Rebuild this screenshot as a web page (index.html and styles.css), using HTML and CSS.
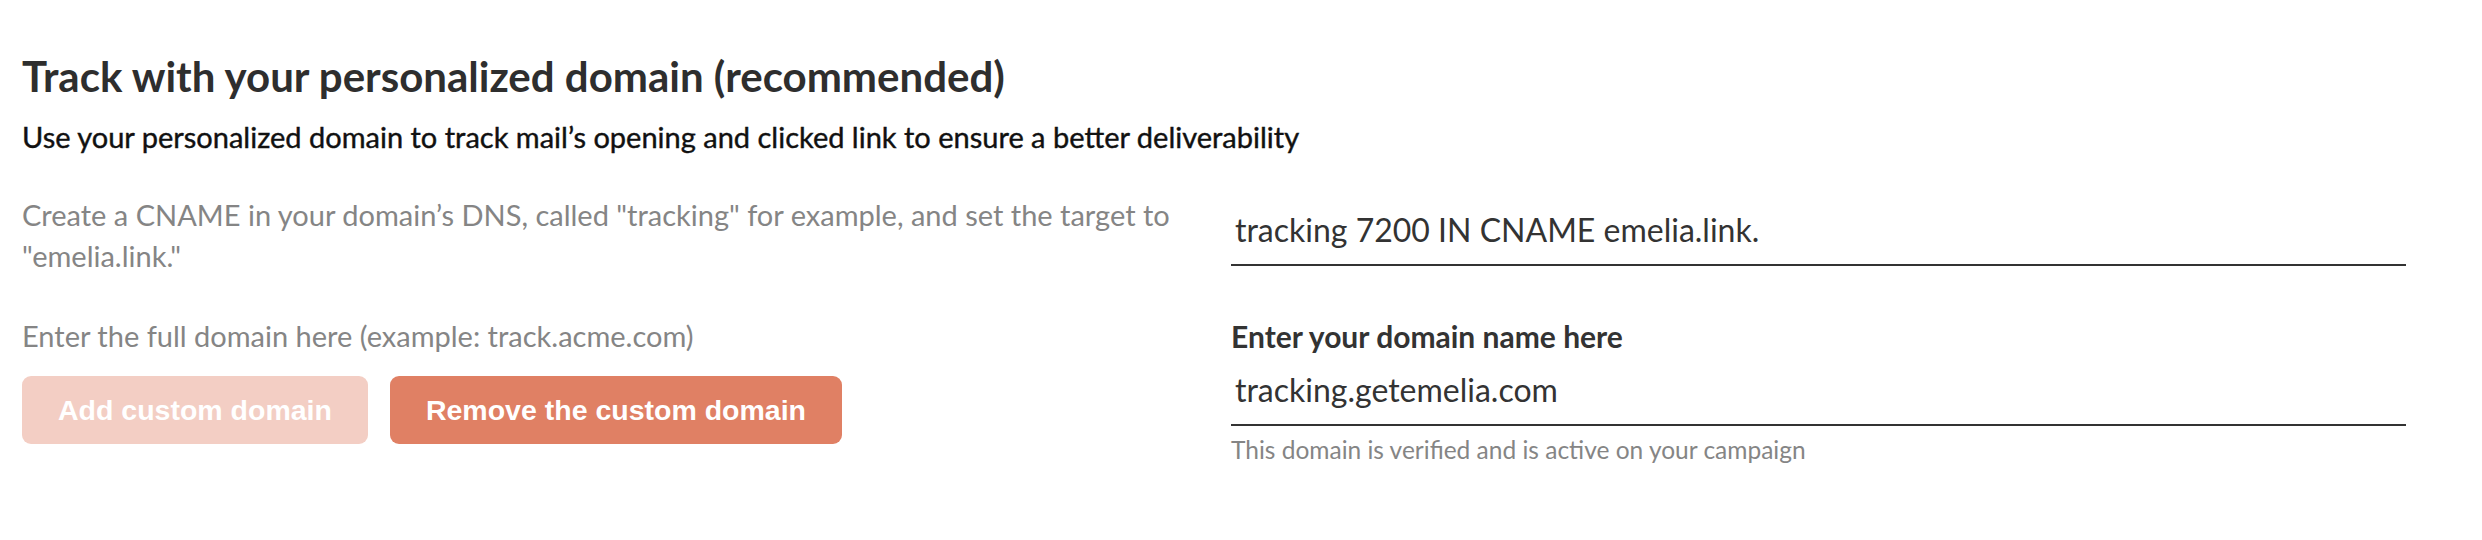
FILE: index.html
```html
<!DOCTYPE html>
<html lang="en">
<head>
  <meta charset="UTF-8" />
  <meta name="viewport" content="width=device-width, initial-scale=1.0" />
  <title>Tracking domain</title>
  <link rel="stylesheet" href="styles.css">
</head>
<body>
  <div class="tracking-section">
    <h2 class="section-title">Track with your personalized domain (recommended)</h2>
    <p class="section-subtitle">Use your personalized domain to track mail’s opening and clicked link to ensure a better deliverability</p>

    <div class="tracking-grid">
      <div class="tracking-left">
        <p class="hint">Create a CNAME in your domain’s DNS, called "tracking" for example, and set the target to "emelia.link."</p>
        <p class="hint">Enter the full domain here (example: track.acme.com)</p>
        <div class="button-row">
          <button class="btn btn-disabled" disabled>Add custom domain</button>
          <button class="btn btn-primary">Remove the custom domain</button>
        </div>
      </div>

      <div class="tracking-right">
        <input type="text" class="line-input cname-input" value="tracking 7200 IN CNAME emelia.link." readonly>
        <label for="domainInput" class="field-label">Enter your domain name here</label>
        <input type="text" id="domainInput" class="line-input" value="tracking.getemelia.com">
        <div class="field-help">This domain is verified and is active on your campaign</div>
      </div>
    </div>
  </div>
</body>
</html>
```

FILE: styles.css
```css
body {
  margin: 0;
  background-color: #fff;
  color: #333;
  font-family: Lato, "Open Sans", sans-serif;
}

.tracking-section {
  padding: 50px 76px 0 22px;
}

.section-title {
  margin: 0;
  font-size: 42px;
  line-height: 52px;
  font-weight: 700;
  color: #2e2e2e;
}

.section-subtitle {
  margin: 15px 0 0;
  font-size: 29px;
  line-height: 40px;
  font-weight: 400;
  color: #111;
  -webkit-text-stroke: 0.4px #111;
}

.tracking-grid {
  display: grid;
  grid-template-columns: 1fr 1fr;
  gap: 34px;
  margin-top: 37px;
}

.hint {
  margin: 0 0 39px;
  font-size: 29px;
  line-height: 41px;
  color: #858585;
}

.hint + .hint {
  margin-bottom: 20px;
}

.button-row {
  display: flex;
  gap: 22px;
}

.btn {
  font-family: "Liberation Sans", Arial, sans-serif;
  font-size: 28.5px;
  line-height: 28px;
  font-weight: 700;
  color: #fff;
  border: none;
  border-radius: 9px;
  padding: 20px 36px;
  cursor: pointer;
}

.btn-primary {
  background-color: #e08064;
}

.btn-disabled {
  background-color: #f3cec4;
  cursor: default;
}

.tracking-right {
  display: flex;
  flex-direction: column;
}

.line-input {
  font-family: inherit;
  font-size: 32px;
  line-height: 40px;
  color: #333;
  border: none;
  border-bottom: 2px solid #333;
  padding: 10px 4px 14px;
  margin: 0;
  outline: none;
  background: transparent;
}

.cname-input {
  margin-top: 6px;
  margin-bottom: 50px;
}

.field-label {
  font-size: 30px;
  line-height: 40px;
  font-weight: 700;
  color: #333;
  margin-bottom: 4px;
}

.field-help {
  margin-top: 8px;
  font-size: 24.5px;
  line-height: 32px;
  color: #858585;
}
```
